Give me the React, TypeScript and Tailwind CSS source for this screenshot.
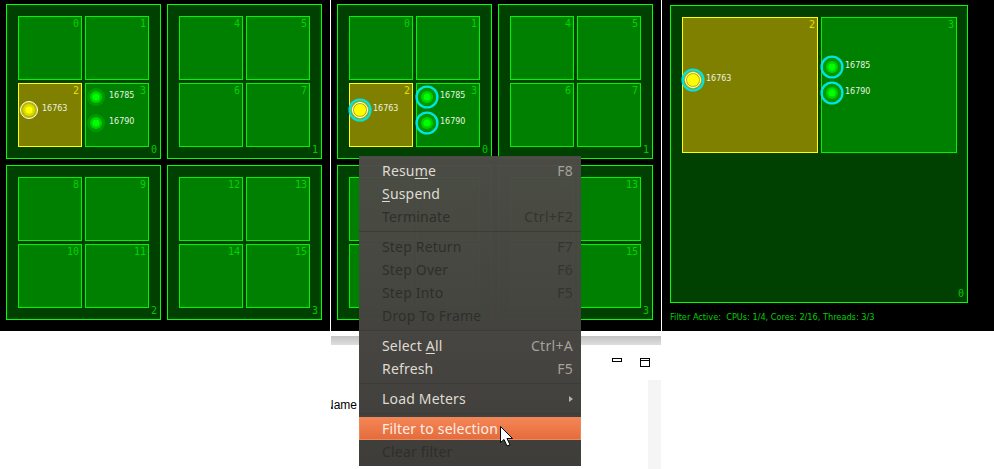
import React from 'react';

type Mode = 'plain' | 'picked' | 'selected';

interface ThreadInfo {
  id: string;
  pos: string;
  busy?: boolean;
}

// the glyph is 24x24 so the cyan ring fits, centre sits at 12,12
const ThreadDot: React.FC<{ busy?: boolean; mode: Mode }> = ({ busy, mode }) => {
  const c = busy ? ['#b8b800', '#dcdc00', '#ffff00'] : ['#009a00', '#00d000', '#00ff00'];
  return (
    <svg width="24" height="24" viewBox="0 0 24 24" className="shrink-0">
      {mode === 'selected' && <circle cx="12" cy="12" r="10.4" fill="none" stroke="#00e4e4" strokeWidth="2.4" />}
      <circle cx="12" cy="12" r={busy && mode === 'picked' ? 8.5 : 9} fill={c[0]} />
      {busy && <circle cx="12" cy="12" r={mode === 'picked' ? 8.5 : 7.5} fill="none" stroke="#ffffff" strokeWidth="1" />}
      <circle cx="12" cy="12" r="6" fill={busy && mode === 'selected' ? c[2] : c[1]} />
      <circle cx="12" cy="12" r="3.5" fill={c[2]} />
    </svg>
  );
};

const Thread: React.FC<{ t: ThreadInfo; mode: Mode }> = ({ t, mode }) => (
  <div className={`absolute -left-[2px] flex ${t.pos}`}>
    <ThreadDot busy={t.busy} mode={mode} />
    <span className="ml-px mt-[4px] h-[14px] text-[8px] leading-[14px] text-[#e8f4e0] font-['DejaVu_Sans',sans-serif]">
      {t.id}
    </span>
  </div>
);

const Core: React.FC<{ n: number; size?: string; busy?: boolean; threads?: ThreadInfo[]; mode?: Mode }> = ({
  n,
  size = 'h-[64px]',
  busy,
  threads = [],
  mode = 'plain',
}) => (
  <div
    className={`relative border ${size} ${busy ? 'border-[#ffff00] bg-[#808000] text-[#e0e000]' : 'border-[#00f400] bg-[#008000] text-[#00d400]'}`}
  >
    <span className="absolute right-[2px] top-[1px] text-[10px] leading-[12px] font-['DejaVu_Sans_Mono',monospace]">{n}</span>
    {threads.map((t) => (
      <Thread key={t.id} t={t} mode={mode} />
    ))}
  </div>
);

const Socket: React.FC<{ n: number; size?: string; children: React.ReactNode }> = ({
  n,
  size = 'w-[155px] h-[155px]',
  children,
}) => (
  <div className={`relative border border-[#00ff00] bg-[#004000] p-[11px] ${size}`}>
    <div className="grid grid-cols-2 gap-[3px]">{children}</div>
    <span className="absolute bottom-[2px] right-[3px] text-[10px] leading-[12px] text-[#00c800] font-['DejaVu_Sans_Mono',monospace]">
      {n}
    </span>
  </div>
);

const socketCores = [
  [0, 1, 2, 3],
  [4, 5, 6, 7],
  [8, 9, 10, 11],
  [12, 13, 14, 15],
];

const FullGrid: React.FC<{ mode: Mode; width: string }> = ({ mode, width }) => (
  <div className={`h-[331px] bg-black pl-[6px] pt-[4px] ${width}`}>
    <div className="grid w-[316px] grid-cols-2 gap-[6px]">
      {socketCores.map((cores, s) => (
        <Socket key={s} n={s}>
          {cores.map((c) => (
            <Core
              key={c}
              n={c}
              mode={mode}
              busy={c === 2}
              threads={
                c === 2
                  ? [{ id: '16763', pos: 'top-[14px]', busy: true }]
                  : c === 3
                    ? [
                        { id: '16785', pos: 'top-px' },
                        { id: '16790', pos: 'top-[27px]' },
                      ]
                    : []
              }
            />
          ))}
        </Socket>
      ))}
    </div>
  </div>
);

const FilteredView: React.FC = () => (
  <div className="h-[331px] w-[332px] bg-black pl-[8px] pt-[5px]">
    <Socket n={0} size="w-[298px] h-[298px] pr-[10px]">
      <Core n={2} size="h-[136px]" busy mode="selected" threads={[{ id: '16763', pos: 'top-[50px]', busy: true }]} />
      <Core
        n={3}
        size="h-[136px]"
        mode="selected"
        threads={[
          { id: '16785', pos: 'top-[37px]' },
          { id: '16790', pos: 'top-[63px]' },
        ]}
      />
    </Socket>
    <p className="mt-[8px] whitespace-pre text-[8.2px] leading-[12px] text-[#00d000] font-['DejaVu_Sans',sans-serif]">
      Filter Active:  CPUs: 1/4, Cores: 2/16, Threads: 3/3
    </p>
  </div>
);

const MenuItem: React.FC<{
  label: React.ReactNode;
  keys?: string;
  disabled?: boolean;
  active?: boolean;
  arrow?: boolean;
}> = ({ label, keys, disabled, active, arrow }) => (
  <div
    className={`flex h-[23px] items-center justify-between pr-[8px] text-[14px] ${
      active
        ? 'border border-[#e98a5e] bg-linear-to-b from-[#f58555] to-[#e56c3c] pl-[22px] text-[#fbeee6]'
        : disabled
          ? 'pl-[23px] text-[#2f2e2b]'
          : 'pl-[23px] text-[#dfdbd2]'
    }`}
  >
    <span className="tracking-[0.18px]">{label}</span>
    {keys && <span className={`tracking-[0.3px] ${disabled ? 'text-[#35342f]' : 'text-[#a5a299]'}`}>{keys}</span>}
    {arrow && <span className="h-0 w-0 border-y-[3px] border-l-[4px] border-y-transparent border-l-[#b5b2a9]" />}
  </div>
);

const MenuSep: React.FC = () => (
  <div className="flex h-[7px] items-center">
    <div className="h-px w-full bg-[#3c3b37]" />
  </div>
);

const ContextMenu: React.FC = () => (
  <div className="absolute left-[359px] top-[156px] h-[310px] w-[222px] bg-linear-to-b from-[#4d4c47]/97 to-[#3e3d39] pt-[3px] font-['Noto_Sans',sans-serif]">
    <MenuItem label={<>Resu<u className="underline-offset-2">m</u>e</>} keys="F8" />
    <MenuItem label={<><u className="underline-offset-2">S</u>uspend</>} />
    <MenuItem label="Terminate" keys="Ctrl+F2" disabled />
    <MenuSep />
    <MenuItem label="Step Return" keys="F7" disabled />
    <MenuItem label="Step Over" keys="F6" disabled />
    <MenuItem label="Step Into" keys="F5" disabled />
    <MenuItem label="Drop To Frame" disabled />
    <MenuSep />
    <MenuItem label={<>Select <u className="underline-offset-2">A</u>ll</>} keys="Ctrl+A" />
    <MenuItem label="Refresh" keys="F5" />
    <MenuSep />
    <MenuItem label="Load Meters" arrow />
    <MenuSep />
    <MenuItem label="Filter to selection" active />
    <MenuItem label="Clear filter" disabled />
  </div>
);

const Pointer: React.FC = () => (
  <svg width="15" height="22" viewBox="0 0 15 22" className="absolute left-[500px] top-[426px]">
    <path d="M0.5 0.5 L0.5 16.5 L4 13.5 L7 20 L10 18.8 L7 12.5 L12.5 12.5 Z" fill="#ffffff" stroke="#000000" strokeWidth="1" />
  </svg>
);

const BackWindow: React.FC = () => (
  <div className="ml-[331px] h-[138px] w-[330px] overflow-hidden">
    <div className="mt-[5px] h-[9px] bg-linear-to-b from-[#c2c2c2] to-[#dedede]" />
    <div className="flex h-[35px] items-start justify-end pr-[11px] pt-[12px]">
      <div className="mt-px h-[4px] w-[10px] border border-black" />
      <div className="ml-[18px] mt-px h-[9px] w-[10px] border border-black">
        <div className="mt-px h-px bg-black" />
      </div>
    </div>
    <div className="flex h-[89px] justify-between">
      <span className="-ml-[6px] mt-[17px] h-[16px] text-[12px] leading-[16px] text-black font-['Liberation_Sans',sans-serif]">
        Name
      </span>
      <div className="w-[13px] bg-[#f5f5f5]" />
    </div>
  </div>
);

export default function App() {
  return (
    <div className="relative h-[469px] w-[994px] overflow-hidden bg-white">
      <div className="flex gap-px">
        <FullGrid mode="picked" width="w-[330px]" />
        <FullGrid mode="selected" width="w-[330px]" />
        <FilteredView />
      </div>
      <BackWindow />
      <ContextMenu />
      <Pointer />
    </div>
  );
}
